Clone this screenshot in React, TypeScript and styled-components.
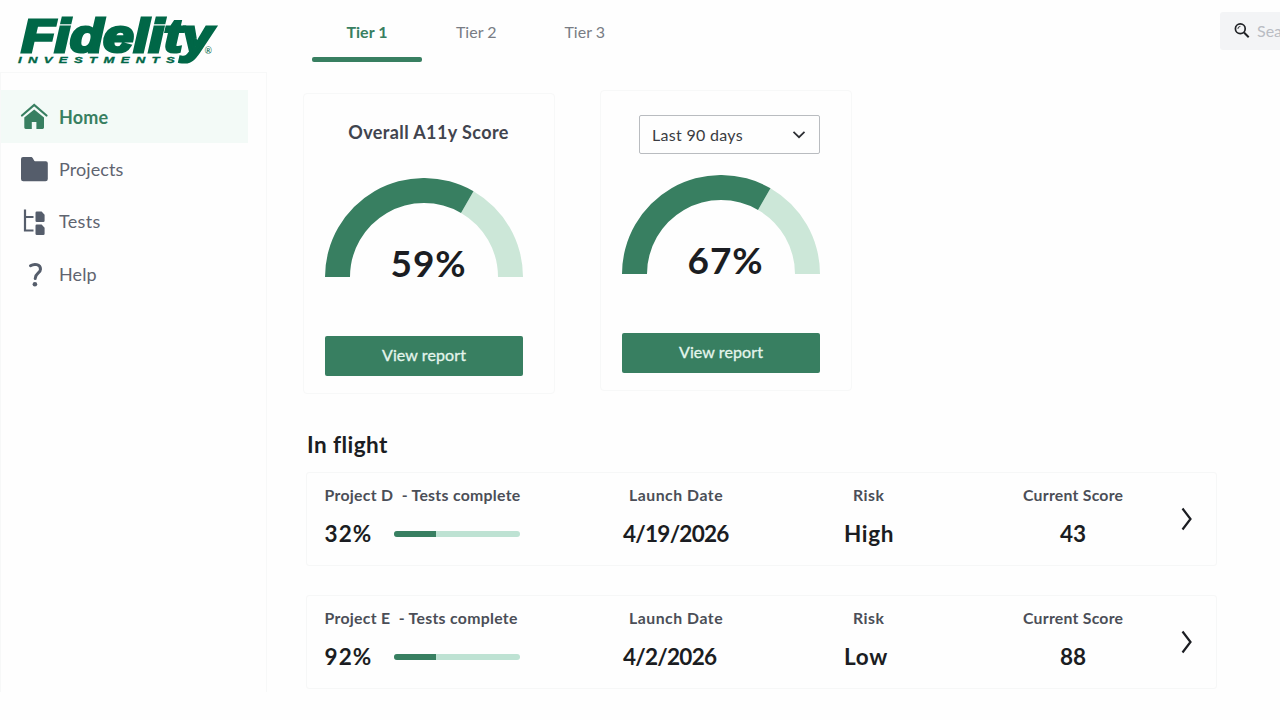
import React from "react";
import styled, { createGlobalStyle } from "styled-components";

type TextProps = { $track?: number };
type Project = {
  name: string;
  complete: string;
  launch: string;
  risk: string;
  score: number;
};

const green = "#387f61";

const GlobalStyle = createGlobalStyle`
  * { box-sizing: border-box; }

  body {
    margin: 0;
    background: #fefefe;
    color: #1b1d22;
    font-family: Lato, "Open Sans", sans-serif;
    font-variant-ligatures: none;
    overflow: hidden;
  }
`;

const Page = styled.div`
  display: flex;
  width: 1280px;
  height: 720px;
  overflow: hidden;
`;

const Sidebar = styled.aside`
  flex: none;
  width: 267px;
`;

const LogoBox = styled.div`
  height: 72px;

  svg {
    display: block;
  }
`;

const Nav = styled.nav`
  height: 620px;
  padding-top: 17px;
  border: 1px solid #f7f8f8;
  border-bottom: 0;
`;

const NavItem = styled.a<{ $active?: boolean }>`
  display: flex;
  align-items: center;
  width: 247px;
  height: 52.7px;
  padding-left: 18px;
  gap: 10px;
  color: ${(p) => (p.$active ? green : "#5f6470")};
  background: ${(p) => (p.$active ? "#f3faf7" : "transparent")};
  font-size: 18px;
  line-height: 22px;
  font-weight: ${(p) => (p.$active ? 700 : 400)};

  svg {
    flex: none;
    color: ${(p) => (p.$active ? green : "#555d6b")};
  }

  span {
    padding: ${(p) => (p.$active ? "1px 0 0" : "0 0 1px")};
  }
`;

const Label = styled.span<TextProps>`
  letter-spacing: ${(p) => p.$track || 0}px;
  white-space: pre;
`;

const Main = styled.main`
  flex: 1;
  min-width: 0;
  padding-left: 36px;
`;

const TopBar = styled.header`
  display: flex;
  justify-content: space-between;
  height: 62px;
  padding-left: 9px;
`;

const Tabs = styled.div`
  display: flex;
`;

const Tab = styled.div<{ $active?: boolean }>`
  width: ${(p) => (p.$active ? 110 : 108.5)}px;
  height: 62px;
  padding-top: 22px;
  display: flex;
  flex-direction: column;
  align-items: center;
  justify-content: space-between;
  color: ${(p) => (p.$active ? green : "#787c84")};
  font-size: 16px;
  line-height: 20px;
  font-weight: ${(p) => (p.$active ? 700 : 400)};

  &::after {
    content: "";
    width: 100%;
    height: 5px;
    border-radius: 2px;
    background: ${(p) => (p.$active ? green : "transparent")};
  }
`;

const Search = styled.div`
  flex: none;
  display: flex;
  align-items: center;
  gap: 7px;
  width: 260px;
  height: 38px;
  margin: 12px -200px 0 0;
  padding: 0 0 2px 14px;
  border-radius: 3px;
  background: #f3f4f6;
  color: #b9bcc3;
  font-size: 16px;
`;

const Cards = styled.section`
  display: flex;
  align-items: flex-start;
  gap: 45px;
  padding-top: 28px;
  height: 367px;
`;

const Card = styled.article<{ $drop?: number }>`
  display: flex;
  flex-direction: column;
  align-items: center;
  width: 252px;
  height: 301px;
  margin-top: ${(p) => p.$drop || 0}px;
  padding: 24px 31px 17.5px 21px;
  border: 1px solid #f7f8f8;
  border-radius: 4px;
`;

const CardTitle = styled.h2`
  margin: 0;
  padding-left: 9px;
  color: #41444e;
  font-size: 18px;
  line-height: 28px;
  font-weight: 700;
`;

const Select = styled.div`
  display: flex;
  align-self: flex-end;
  align-items: center;
  justify-content: space-between;
  width: 181px;
  height: 39px;
  padding: 0 13px 1px 12px;
  border: 1px solid #b9bcc0;
  border-radius: 2px;
  color: #3a3c42;
  font-size: 16px;
`;

const GaugeBox = styled.div`
  display: grid;
  width: 198px;
  height: 99px;
  margin-top: auto;

  > * {
    grid-area: 1 / 1;
  }
`;

const Percent = styled.div`
  place-self: end center;
  padding-left: 9px;
  font-size: 37px;
  line-height: 28px;
  font-weight: 700;
  letter-spacing: 0.9px;
`;

const Button = styled.button`
  width: 198.5px;
  height: 40px;
  margin-top: 58.5px;
  padding: 0 0 2px;
  flex: none;
  border: 0;
  border-radius: 2px;
  background: ${green};
  color: #e4f5ec;
  font: 400 16px Lato, sans-serif;
  -webkit-text-stroke: 0.3px #e4f5ec;
`;

const Section = styled.section`
  width: 914px;
  padding-left: 3px;
`;

const SectionTitle = styled.h1`
  margin: 0 0 12px 1px;
  font-size: 22.5px;
  line-height: 31px;
  font-weight: 700;
`;

const Row = styled.article`
  display: grid;
  grid-template-columns: 298.5px 221px 179px 100px 1fr;
  align-items: start;
  height: 94px;
  margin-bottom: 29px;
  padding: 6px 23px 0 17.5px;
  border: 1px solid #f6f7f7;
  border-radius: 3px;

  > svg {
    justify-self: end;
    margin-top: 28px;
  }
`;

const Cell = styled.div<{ $indent?: number; $center?: boolean }>`
  text-align: ${(p) => (p.$center ? "center" : "left")};

  .label {
    height: 36px;
    padding-left: ${(p) => p.$indent || 0}px;
    color: #4b4e57;
    font-size: 15.8px;
    line-height: 32px;
    font-weight: 700;
    white-space: nowrap;
  }

  .value {
    display: flex;
    align-items: center;
    justify-content: ${(p) => (p.$center ? "center" : "flex-start")};
    height: 38px;
    font-size: 22.5px;
    line-height: 28px;
    font-weight: 700;
  }
`;

const Amount = styled.div`
  width: 69.5px;
  letter-spacing: 1.1px;
`;

const Progress = styled.div`
  width: 126px;
  height: 6.5px;
  border-radius: 3px;
  overflow: hidden;
  background: #bee2d3;

  &::before {
    content: "";
    display: block;
    width: 33.3%;
    height: 100%;
    background: ${green};
  }
`;

const Logo = () => (
  <svg width="240" height="72" viewBox="0 0 240 72" fill="#006747">
    <text
      x="21.5"
      y="51.5"
      fontFamily="Liberation Sans"
      fontStyle="italic"
      fontWeight="700"
      fontSize="47"
      textLength="191"
      lengthAdjust="spacingAndGlyphs"
      stroke="#006747"
      strokeWidth="3.2"
    >
      Fidelity
    </text>
    <text
      transform="translate(18 63) scale(1.5 1)"
      fontFamily="Liberation Sans"
      fontStyle="italic"
      fontWeight="700"
      fontSize="8.8"
      textLength="104.5"
      stroke="#006747"
      strokeWidth="0.3"
    >
      INVESTMENTS
    </text>
    <text x="204.5" y="54" fontSize="9" fontFamily="Lato">®</text>
  </svg>
);

const HomeIcon = () => (
  <svg width="30" height="30" viewBox="0 0 30 30" fill="currentColor">
    <path d="M3 14.5 15.2 4 27.5 14.5" fill="none" stroke="currentColor" strokeWidth="2.2" strokeLinecap="round" />
    <path d="M15.2 8.4 25 16.5V26.5a1.4 1.4 0 0 1-1.4 1.4h-6.2v-6.8h-4.6v6.8H6.7A1.4 1.4 0 0 1 5.3 26.5v-10Z" />
  </svg>
);

const FolderIcon = () => (
  <svg width="30" height="30" viewBox="0 0 30 30" fill="currentColor">
    <path d="M4 3h8.5c1.4 0 2.2 4.2 3.5 4.2h10.8a2 2 0 0 1 2 2V25a2.3 2.3 0 0 1-2.3 2.3H4.3A2.3 2.3 0 0 1 2 25V5a2 2 0 0 1 2-2Z" />
  </svg>
);

const TreeIcon = () => (
  <svg width="30" height="30" viewBox="0 0 30 30" fill="currentColor">
    <path d="M6 2.5V23.5H14.5M6 10h8.5" fill="none" stroke="currentColor" strokeWidth="2.2" />
    <path d="M17.8 4.5h4.8l3 3.3v6a1.3 1.3 0 0 1-1.3 1.3h-6.5a1.3 1.3 0 0 1-1.3-1.3V5.8a1.3 1.3 0 0 1 1.3-1.3ZM17.8 17.5h4.8l3 3.3v6a1.3 1.3 0 0 1-1.3 1.3h-6.5a1.3 1.3 0 0 1-1.3-1.3v-8a1.3 1.3 0 0 1 1.3-1.3Z" />
  </svg>
);

const HelpIcon = () => (
  <svg width="30" height="30" viewBox="0 0 30 30" fill="currentColor">
    <path d="M11.5 6.7C15 4.5 21.5 4.9 21.5 10.2 21.5 14.3 16.2 14.3 16.2 19.4" fill="none" stroke="currentColor" strokeWidth="3" strokeLinecap="round" />
    <circle cx="15.9" cy="25.3" r="2.3" />
  </svg>
);

const SearchIcon = () => (
  <svg width="16" height="16" viewBox="0 0 16 16" fill="none" stroke="#202226">
    <circle cx="6.3" cy="6.8" r="4.9" strokeWidth="1.7" />
    <path d="M10 10.5 14.7 15.2" strokeWidth="2" />
    <path d="M3.9 6.9A2.5 2.5 0 0 1 6.4 4.4" strokeWidth="0.9" />
  </svg>
);

// half ring, filled to two thirds
const Gauge = ({ value }: { value: string }) => (
  <GaugeBox>
    <svg width="198" height="99" viewBox="0 0 198 99">
      <path d="M148.5 13.26A99 99 0 0 1 198 99H173A74 74 0 0 0 136 34.91Z" fill="#cce7d8" />
      <path d="M0 99A99 99 0 0 1 148.5 13.26L136 34.91A74 74 0 0 0 25 99Z" fill={green} />
    </svg>
    <Percent>{value}</Percent>
  </GaugeBox>
);

const projects: Array<Project> = [
  { name: "Project D", complete: "32%", launch: "4/19/2026", risk: "High", score: 43 },
  { name: "Project E", complete: "92%", launch: "4/2/2026", risk: "Low", score: 88 },
];

const ProjectRow = ({ name, complete, launch, risk, score }: Project) => (
  <Row>
    <Cell>
      <div className="label"><Label $track={0.3}>{name + "  - Tests complete"}</Label></div>
      <div className="value">
        <Amount>{complete}</Amount>
        <Progress />
      </div>
    </Cell>
    <Cell $indent={6}>
      <div className="label"><Label $track={0.52}>Launch Date</Label></div>
      <div className="value"><Label $track={-0.75}>{launch}</Label></div>
    </Cell>
    <Cell $indent={9}>
      <div className="label"><Label $track={0.5}>Risk</Label></div>
      <div className="value"><Label $track={0.65}>{risk}</Label></div>
    </Cell>
    <Cell $center>
      <div className="label"><Label $track={0.25}>Current Score</Label></div>
      <div className="value">{score}</div>
    </Cell>
    <svg width="12" height="24" viewBox="0 0 12 24" fill="none" stroke="#1b1d22" strokeWidth="2.2">
      <path d="M1.5 1.5 9.5 12 1.5 22.5" />
    </svg>
  </Row>
);

export default () => {
  return (
    <Page>
      <GlobalStyle />
      <Sidebar>
        <LogoBox><Logo /></LogoBox>
        <Nav>
          <NavItem $active><HomeIcon /><Label $track={0.15}>Home</Label></NavItem>
          <NavItem><FolderIcon /><Label $track={0.1}>Projects</Label></NavItem>
          <NavItem><TreeIcon /><Label $track={0.3}>Tests</Label></NavItem>
          <NavItem><HelpIcon /><Label $track={0.1}>Help</Label></NavItem>
        </Nav>
      </Sidebar>
      <Main>
        <TopBar>
          <Tabs>
            <Tab $active>Tier 1</Tab>
            <Tab>Tier 2</Tab>
            <Tab>Tier 3</Tab>
          </Tabs>
          <Search><SearchIcon />Search</Search>
        </TopBar>
        <Cards>
          <Card $drop={3}>
            <CardTitle><Label $track={0.4}>Overall A11y Score</Label></CardTitle>
            <Gauge value="59%" />
            <Button><Label $track={0.1}>View report</Label></Button>
          </Card>
          <Card>
            <Select>
              <Label $track={0.3}>Last 90 days</Label>
              <svg width="14" height="10" viewBox="0 0 14 10" fill="none" stroke="#2c2e33" strokeWidth="1.7">
                <path d="M1.5 2.8 7 8.2 12.5 2.8" />
              </svg>
            </Select>
            <Gauge value="67%" />
            <Button><Label $track={0.1}>View report</Label></Button>
          </Card>
        </Cards>
        <Section>
          <SectionTitle><Label $track={0.45}>In flight</Label></SectionTitle>
          {projects.map((project) => (
            <ProjectRow key={project.name} {...project} />
          ))}
        </Section>
      </Main>
    </Page>
  );
};
